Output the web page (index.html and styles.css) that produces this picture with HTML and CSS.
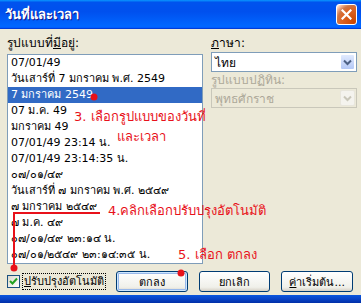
FILE: index.html
```html
<!DOCTYPE html>
<html lang="th">
<head>
    <meta charset="UTF-8">
    <title>วันที่และเวลา</title>
    <link rel="stylesheet" href="styles.css">
</head>
<body>
    <div class="window">
        <div class="titlebar">
            <span class="title">วันที่และเวลา</span>
            <button class="close-btn">
                <svg width="11" height="11" viewBox="0 0 11 11"><path d="M1.5 1.5 L9.5 9.5 M9.5 1.5 L1.5 9.5" stroke="#fff" stroke-width="2.2" stroke-linecap="square"/></svg>
            </button>
        </div>

        <div class="content">
            <div class="main">
                <div class="formats">
                    <div class="label">รูปแบบที่<u>มี</u>อยู่:</div>
                    <ul class="listbox">
                        <li>07/01/49</li>
                        <li>วันเสาร์ที่ 7 มกราคม พ.ศ. 2549</li>
                        <li class="selected">7 มกราคม 2549</li>
                        <li>07 ม.ค. 49</li>
                        <li>มกราคม 49</li>
                        <li>07/01/49 23:14 น.</li>
                        <li>07/01/49 23:14:35 น.</li>
                        <li>๐๗/๐๑/๔๙</li>
                        <li>วันเสาร์ที่ ๗ มกราคม พ.ศ. ๒๕๔๙</li>
                        <li>๗ มกราคม ๒๕๔๙</li>
                        <li>๗ ม.ค. ๔๙</li>
                        <li>๐๗/๐๑/๔๙ ๒๓:๑๔ น.</li>
                        <li>๐๗/๐๑/๒๕๔๙ ๒๓:๑๔:๓๕ น.</li>
                    </ul>
                </div>
                <div class="options">
                    <div class="label"><u>ภ</u>าษา:</div>
                    <div class="combo">
                        <span class="combo-text">ไทย</span>
                        <span class="drop"><svg width="9" height="7" viewBox="0 0 9 7"><path d="M1 1.5 L4.5 5 L8 1.5" fill="none" stroke="#4d6185" stroke-width="2"/></svg></span>
                    </div>
                    <div class="label disabled">รูปแบบปฏิทิน:</div>
                    <div class="combo disabled">
                        <span class="combo-text">พุทธศักราช</span>
                        <span class="drop"><svg width="9" height="7" viewBox="0 0 9 7"><path d="M1 1.5 L4.5 5 L8 1.5" fill="none" stroke="#c9c7ba" stroke-width="2"/></svg></span>
                    </div>
                </div>
            </div>

            <div class="footer">
                <label class="check">
                    <span class="box"><svg width="9" height="9" viewBox="0 0 9 9"><path d="M1 4 L3.5 6.5 L8 1.5" fill="none" stroke="#21a121" stroke-width="2"/></svg></span>
                    <span class="check-text"><u>ป</u>รับปรุงอัตโนมัติ</span>
                </label>
                <button class="btn default">ตกลง</button>
                <button class="btn">ยกเลิก</button>
                <button class="btn"><u>ค่</u>าเริ่มต้น...</button>
            </div>
        </div>
        <div class="frame-bottom"></div>

        <!-- annotations drawn over the dialog -->
        <svg class="marks" width="361" height="303">
            <circle cx="94" cy="97" r="3.5" fill="#e8111a"/>
            <path d="M100 213 L14 213 L14 268" fill="none" stroke="#e8111a" stroke-width="2"/>
            <circle cx="14" cy="268" r="3.5" fill="#e8111a"/>
            <circle cx="181" cy="273" r="3.5" fill="#e8111a"/>
        </svg>
        <div class="note note-3">3. เลือกรูปแบบของวันที่</div>
        <div class="note note-3b">และเวลา</div>
        <div class="note note-4">4.คลิกเลือกปรับปรุงอัตโนมัติ</div>
        <div class="note note-5">5. เลือก ตกลง</div>
    </div>
</body>
</html>
```

FILE: styles.css
```css
body {
    margin: 0;
    padding: 0;
    font-family: Tahoma, "DejaVu Sans", "Noto Sans", sans-serif;
    font-size: 12px;
    overflow: hidden;
}
.window {
    position: relative;
    width: 361px;
    height: 303px;
    background: #ece9d8;
    display: flex;
    flex-direction: column;
}
.titlebar {
    height: 29px;
    flex-shrink: 0;
    display: flex;
    align-items: center;
    justify-content: space-between;
    padding: 0 4px 0 5px;
    background: linear-gradient(to bottom, #0997ff, #0053ee 8%, #0050ee 40%, #0066ff 88%, #0066ff 93%, #005bff 95%, #003dd7 96%, #003dd7);
}
.title {
    color: #fff;
    font-weight: bold;
    font-size: 13px;
    text-shadow: 1px 1px #0f1089;
}
.close-btn {
    width: 21px;
    height: 21px;
    padding: 0;
    border: 1px solid #fff;
    border-radius: 3px;
    background: radial-gradient(circle at 90% 90%, #cc4600 0%, #dc6527 55%, #cd7546 70%, #ffccb2 90%, #fff 100%);
    display: flex;
    align-items: center;
    justify-content: center;
}
.content {
    flex: 1;
    padding: 6px 4px 0 7px;
    display: flex;
    flex-direction: column;
}
.main {
    display: flex;
    gap: 8px;
}
.label {
    line-height: 16px;
    color: #000;
}
.label.disabled {
    color: #aca899;
}
.formats .label {
    margin-bottom: 3px;
}
.listbox {
    list-style: none;
    margin: 0;
    padding: 0;
    width: 194px;
    height: 208px;
    border: 1px solid #7f9db9;
    background: #fff;
    overflow: hidden;
    font-size: 11px;
}
.listbox li {
    height: 16px;
    line-height: 16px;
    padding-left: 3px;
    white-space: nowrap;
}
.listbox li.selected {
    background: #316ac5;
    color: #fff;
}
.options {
    flex: 1;
}
.combo {
    height: 18px;
    margin: 1px 0 0;
    border: 1px solid #7f9db9;
    background: #fff;
    display: flex;
    align-items: center;
    justify-content: space-between;
    padding-left: 3px;
}
.combo.disabled {
    margin-top: 0;
    background: #ece9d8;
    border-color: #c9c7ba;
    color: #aca899;
}
.drop {
    width: 15px;
    height: 16px;
    margin-right: 1px;
    border: 1px solid #fff;
    box-sizing: border-box;
    border-radius: 2px;
    background: linear-gradient(to bottom, #e1eafe, #b4c8f6);
    display: flex;
    align-items: center;
    justify-content: center;
}
.combo.disabled .drop {
    background: #f4f3ee;
    border-color: #e8e6dc;
}
.footer {
    margin-top: 7px;
    display: flex;
    align-items: center;
    gap: 11px;
    padding-right: 4px;
}
.check {
    flex: 1;
    display: flex;
    align-items: center;
    gap: 3px;
    white-space: nowrap;
}
.box {
    width: 11px;
    height: 11px;
    border: 1px solid #1c5180;
    background: linear-gradient(135deg, #dcd9cd, #fff);
    display: flex;
    align-items: center;
    justify-content: center;
}
.check-text {
    outline: 1px dotted #000;
    padding: 0 1px;
    line-height: 15px;
    font-size: 11px;
}
.btn {
    width: 73px;
    height: 21px;
    padding: 0;
    font-family: inherit;
    font-size: 11px;
    color: #000;
    border: 1px solid #003c74;
    border-radius: 3px;
    background: linear-gradient(to bottom, #fff, #f0f0ea 80%, #d6d0c5);
}
.btn.default {
    box-shadow: inset 0 0 0 1px #cee7ff, inset 0 0 0 2px #98b8ea;
}
.frame-bottom {
    height: 8px;
    flex-shrink: 0;
    background: linear-gradient(to bottom, #0a57df, #0843c6 50%, #002fa8);
}
.marks {
    position: absolute;
    left: 0;
    top: 0;
    pointer-events: none;
}
.note {
    position: absolute;
    color: #e8111a;
    font-size: 13px;
    white-space: nowrap;
    line-height: 16px;
}
.note-3 { left: 74px; top: 109px; }
.note-3b { left: 117px; top: 129px; }
.note-4 { left: 108px; top: 203px; }
.note-5 { left: 178px; top: 247px; }
```
